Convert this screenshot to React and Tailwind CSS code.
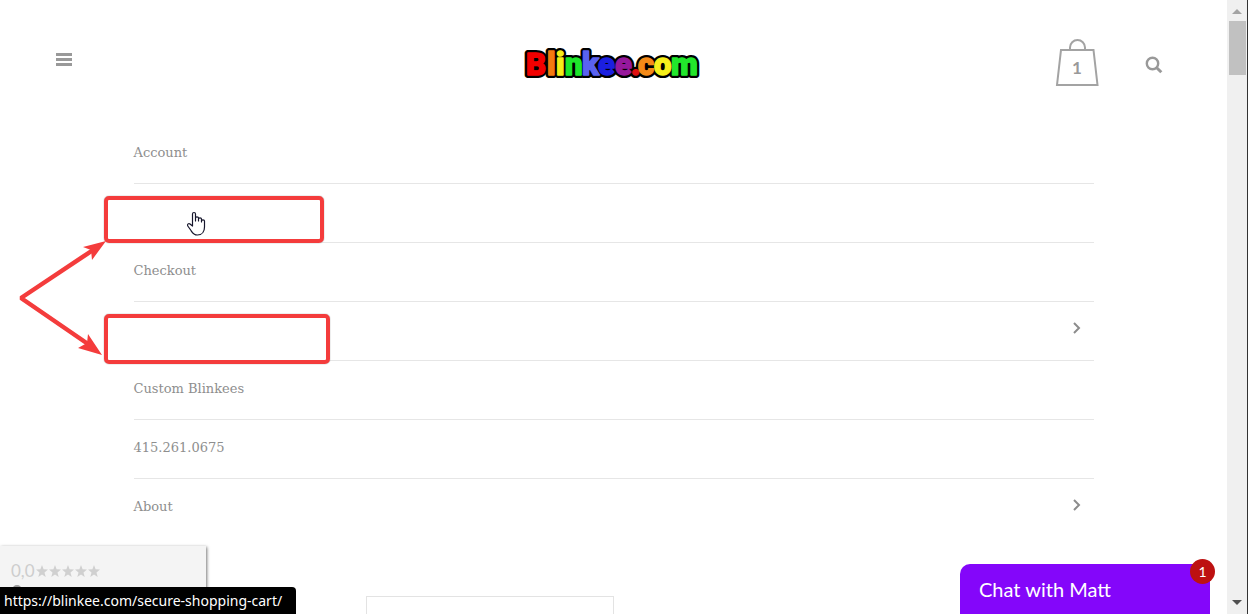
const letters = [
  ['B', 526, '#f20000'], ['l', 547, '#f47a10'], ['i', 556, '#f5ee18'], ['n', 565, '#1ee62a'],
  ['k', 582, '#5a62f0'], ['e', 598, '#1b1fe0'], ['e', 615, '#96189c'], ['.', 631, '#e01010'],
  ['c', 638, '#f58a18'], ['o', 654, '#f6f01c'], ['m', 671, '#22e62c'],
];

const items = [
  { label: 'Account' },
  { label: 'Secure Shopping Cart', hidden: true },
  { label: 'Checkout' },
  { label: 'Shop', hidden: true, more: true },
  { label: 'Custom Blinkees' },
  { label: '415.261.0675' },
  { label: 'About', more: true },
];

function Logo() {
  return (
    <svg width="180" height="38" viewBox="523 44 180 38" role="img" aria-label="Blinkee.com">
      <g fontFamily="Roboto, sans-serif" fontWeight="900" fontSize="31" strokeLinejoin="round">
        {letters.map(([c, x], i) => (
          <text key={i} x={x + 1} y="75" fill="#000" stroke="#000" strokeWidth="6">{c}</text>
        ))}
        {letters.map(([c, x, color], i) => (
          <text key={i} x={x + 1} y="75" fill={color} stroke={color} strokeWidth="1.4">{c}</text>
        ))}
      </g>
    </svg>
  );
}

function Header() {
  return (
    <header className="grid h-[125px] grid-cols-[1fr_auto_1fr] items-start pl-14 pr-16">
      <button aria-label="Menu" className="mt-[53px] w-4">
        <svg className="block" width="16" height="14" viewBox="0 0 16 14" fill="#999">
          <path d="M0 0h16v3H0zM0 5h16v3H0zM0 10h16v3H0z" />
        </svg>
      </button>
      <a href="#home" className="mt-11 mr-1 ml-2"><Logo /></a>
      <div className="mt-[38px] flex items-center justify-end gap-[46px]">
        <a href="#cart" aria-label="Cart, 1 item">
          <svg className="block" width="44" height="49" viewBox="0 0 44 49" fill="none" stroke="#a3a3a3" strokeWidth="2">
            <path d="M6 12h32.500l4 35H2z" />
            <path d="M15 12V9.500a7.500 7.500 0 0 1 15 0V12" />
            <text x="22" y="36" textAnchor="middle" fill="#999" stroke="none" fontFamily="Lato, sans-serif" fontWeight="700" fontSize="17">1</text>
          </svg>
        </a>
        <button aria-label="Search" className="mt-1">
          <svg className="block" width="18" height="18" viewBox="0 0 18 18" fill="none" stroke="#999">
            <circle cx="7.500" cy="7.500" r="5.700" strokeWidth="2.400" />
            <path d="m11.700 11.700 4.600 4.600" strokeWidth="3" />
          </svg>
        </button>
      </div>
    </header>
  );
}

function Scrollbar() {
  return (
    <div aria-hidden="true" className="flex w-[21px] shrink-0 flex-col items-center border-r border-[#333] bg-[#f0f0f0]">
      <svg width="10" height="21" viewBox="0 0 10 21"><path d="M0 14h10L5 9z" fill="#a3a3a3" /></svg>
      <div className="h-[54px] w-[17px] bg-[#c1c1c1]" />
      <svg className="mt-auto" width="10" height="21" viewBox="0 0 10 21"><path d="M0 7h10l-5 5z" fill="#505050" /></svg>
    </div>
  );
}

function Annotations() {
  return (
    <div aria-hidden="true" className="pointer-events-none">
      <div className="absolute left-[104px] top-[196px] h-[47px] w-[220px] rounded-[5px] border-4 border-[#f43c3c] shadow-[0_0_1px_#555]" />
      <div className="absolute left-[104px] top-[314px] h-[50px] w-[226px] rounded-[5px] border-4 border-[#f43c3c] shadow-[0_0_1px_#555]" />
      <svg className="absolute left-0 top-[230px]" width="120" height="140" viewBox="0 230 120 140">
        <path d="M93 250 21 298l67 46" fill="none" stroke="#f43c3c" strokeWidth="4.500" strokeLinejoin="bevel" />
        <path d="m106 241-23 6 8 3 1 10zM102 355l-24-7 9-5 1-9z" fill="#f43c3c" />
      </svg>
      <svg className="absolute left-[187px] top-[211px]" width="19" height="26" viewBox="0 0 19 26">
        <path d="M5.500 15V3c0-2 3-2 3 0v7-3c0-1.500 3-1.500 3 0v3-2c0-1.500 3-1.500 3 0v3-1c0-1.500 3-1.500 3 0v6c0 4-2 8-7 8-4 0-5-2-6.500-4.500L.8 15c-.8-2 1-3 2.200-2z" fill="#fff" stroke="#15152b" strokeWidth="1.200" strokeLinejoin="round" />
      </svg>
    </div>
  );
}

export default function App() {
  return (
    <div className="relative flex h-screen overflow-hidden bg-white">
      <main className="min-w-0 flex-1">
        <Header />
        <nav className="mx-auto w-full max-w-[960px] font-['DejaVu_Serif',serif] text-[13px] leading-5 text-[#8e8e8e]">
          <ul>
            {items.map((item) => (
              <li key={item.label} className="border-b border-[#e6e6e6] last:border-0">
                <a href="#page" aria-label={item.label} className="flex h-[58px] items-center justify-between pb-0.5 pr-3">
                  <span>{item.hidden ? '' : item.label}</span>
                  {item.more && (
                    <svg className="mb-1" width="10" height="14" viewBox="0 0 10 14" fill="none" stroke="#8c8c8c" strokeWidth="2">
                      <path d="m2 2 5 5-5 5" />
                    </svg>
                  )}
                </a>
              </li>
            ))}
          </ul>
        </nav>
        <div className="mx-[366px] mt-[59px] h-16 w-[248px] border border-[#e3e3e3]" />
      </main>
      <Scrollbar />
      <Annotations />

      <aside className="absolute bottom-0 left-0 h-[68px] w-[206px] overflow-hidden bg-[#f4f4f4] px-[11px] pt-[15px] font-[Lato,sans-serif] text-[17px] leading-5 text-[#cdcdcd] shadow-[1px_1px_3px_#777]">
        <div className="flex items-center gap-px">
          <span>0,0</span>
          <svg width="64" height="13" viewBox="0 0 64 13" fill="#d0d0d0" role="img" aria-label="0 of 5 stars">
            {[0, 13, 26, 39, 52].map((x) => (
              <path key={x} transform={`translate(${x} 0)`} d="m6 0 1.600 4.300 4.400.2-3.500 2.900L9.700 12 6 9.500 2.300 12l1.200-4.600L0 4.500l4.400-.2z" />
            ))}
          </svg>
        </div>
        <div className="ml-px mt-1 h-3 w-2.5 rounded-full border-2 border-[#999]" />
      </aside>
      <div className="absolute bottom-0 left-0 flex h-[27px] items-center rounded-tr bg-black pl-1 pr-3.5 font-['Noto_Sans',sans-serif] text-sm text-white">
        https://blinkee.com/secure-shopping-cart/
      </div>

      <button className="absolute bottom-0 right-[38px] h-[50px] w-[250px] rounded-tl-[10px] bg-[#8406fa] px-[19px] text-left font-[Lato,sans-serif] text-xl text-white">
        Chat with Matt
        <span className="absolute -right-[5px] -top-[5px] flex h-[25px] w-[25px] items-center justify-center rounded-full bg-[#bd1111] text-sm">1</span>
      </button>
    </div>
  );
}
